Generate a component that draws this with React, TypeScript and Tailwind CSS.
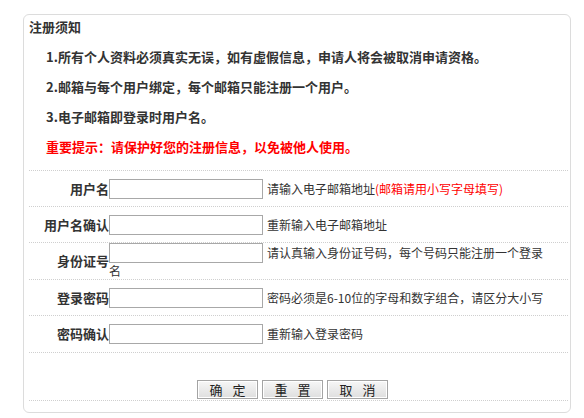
import React from 'react';

const NOTES = [
  '1.所有个人资料必须真实无误，如有虚假信息，申请人将会被取消申请资格。',
  '2.邮箱与每个用户绑定，每个邮箱只能注册一个用户。',
  '3.电子邮箱即登录时用户名。',
];

function Field({ label, h, children }: { label: string; h: string; children: React.ReactNode }) {
  return (
    <div className={`flex items-center border-b border-dotted border-[#cfcfcf] ${h}`}>
      <div className="w-[80px] shrink-0 text-right text-[13px] font-bold text-[#333]">{label}</div>
      <div className="w-[440px] text-[12px] leading-[16px] text-[#333]">{children}</div>
    </div>
  );
}

function Input() {
  return (
    <input
      type="text"
      className="inline-block h-[20px] w-[154px] border border-[#a8a8a8] bg-white align-middle outline-none"
    />
  );
}

function Btn({ a, b }: { a: string; b: string }) {
  return (
    <button
      type="button"
      className="flex h-[19px] w-[61px] items-center justify-center gap-[10px] border border-[#a4a4a4] bg-gradient-to-b from-[#f7f7f7] to-[#dedede] text-[13px] leading-none text-[#222] shadow-[inset_0_0_0_1px_#ffffff]"
    >
      <span>{a}</span>
      <span>{b}</span>
    </button>
  );
}

export default function App() {
  return (
    <div className="h-[418px] w-[584px] bg-white pt-[14px] font-['Noto_Sans_CJK_SC','Liberation_Sans',sans-serif]">
      <div className="ml-[23px] h-[399px] w-[548px] rounded-[6px] border border-[#dcdcdc]">
        {/* 须知 */}
        <div className="mt-[2px] pl-[5px] text-[13px] font-bold leading-[20px] text-[#333]">注册须知</div>
        <div className="mt-[5px] pl-[22px] text-[13px] font-bold leading-[30px]">
          {NOTES.map((n) => (
            <div key={n} className="text-[#333]">{n}</div>
          ))}
          <div className="text-[#ff0000]">重要提示：请保护好您的注册信息，以免被他人使用。</div>
        </div>

        {/* 表单 */}
        <div className="ml-[5px] mr-[2px] mt-[8px] border-t border-dotted border-[#cfcfcf]">
          <Field label="用户名" h="h-[36px]">
            <Input />
            <span className="ml-[4px] align-middle">
              请输入电子邮箱地址<span className="text-[#ff0000]">(邮箱请用小写字母填写)</span>
            </span>
          </Field>
          <Field label="用户名确认" h="h-[36px]">
            <Input />
            <span className="ml-[4px] align-middle">重新输入电子邮箱地址</span>
          </Field>
          <Field label="身份证号" h="h-[37px]">
            <Input />
            <span className="ml-[4px] align-middle">请认真输入身份证号码，每个号码只能注册一个登录</span>
            <br />
            <span>名</span>
          </Field>
          <Field label="登录密码" h="h-[36px]">
            <Input />
            <span className="ml-[4px] whitespace-nowrap align-middle">密码必须是6-10位的字母和数字组合，请区分大小写</span>
          </Field>
          <Field label="密码确认" h="h-[37px]">
            <Input />
            <span className="ml-[4px] align-middle">重新输入登录密码</span>
          </Field>
          <div className="flex h-[48px] items-end gap-[4px] border-b border-dotted border-[#cfcfcf] pb-[1px] pl-[168px]">
            <Btn a="确" b="定" />
            <Btn a="重" b="置" />
            <Btn a="取" b="消" />
          </div>
        </div>
      </div>
    </div>
  );
}
